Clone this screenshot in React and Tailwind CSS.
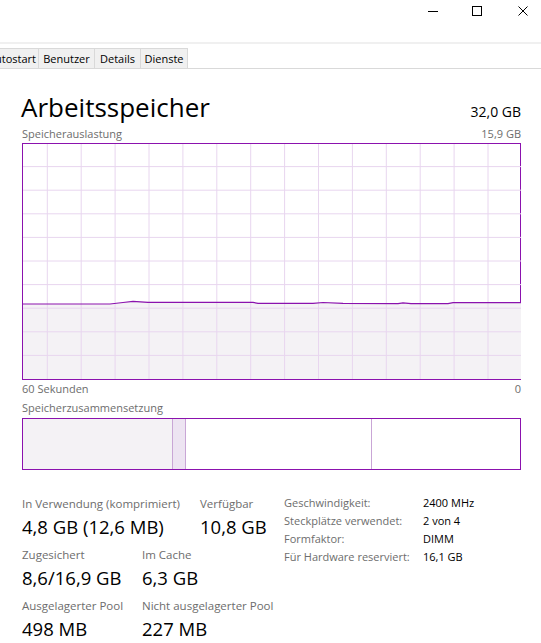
import React from "react";

const FONT = { fontFamily: '"Open Sans", "Noto Sans", "Liberation Sans", sans-serif' };

const GRID_X = Array.from({ length: 14 }, (_, i) => 24.3 + i * 33.9);
const GRID_Y = Array.from({ length: 9 }, (_, i) => 22.6 + i * 23.6);

const LINE = [
  [0, 160], [87, 160], [100, 158.5], [110, 157.4], [125, 158.3], [230, 158.3],
  [235, 159.4], [290, 159.4], [300, 158.5], [320, 159.4], [375, 159.6],
  [380, 158.8], [388, 159.6], [425, 159.6], [430, 158.6], [498, 158.6],
];

function MemGraph() {
  const pts = LINE.map(([x, y]) => `${x},${y}`).join(" ");
  return (
    <div className="border border-[#8b12ae] h-[237px] bg-white">
      <svg width="498" height="235" className="block">
        <polygon points={`0,235 ${pts} 498,235`} fill="#f4f2f5" />
        {GRID_X.map((x) => (
          <line key={"x" + x} x1={x} y1="0" x2={x} y2="235" stroke="#e8d6ef" strokeWidth="1" />
        ))}
        {GRID_Y.map((y) => (
          <line key={"y" + y} x1="0" y1={y} x2="498" y2={y} stroke="#e8d6ef" strokeWidth="1" />
        ))}
        <polyline points={pts} fill="none" stroke="#8b12ae" strokeWidth="1.2" />
      </svg>
    </div>
  );
}

function Stat({ label, value, className }) {
  return (
    <div className={className}>
      <div className="text-[11.5px] leading-[16px] text-[#6d6d6d] whitespace-nowrap">{label}</div>
      <div className="text-[18.5px] leading-[24px] text-black mt-[3px] whitespace-nowrap">{value}</div>
    </div>
  );
}

export default function App() {
  const details = [
    ["Geschwindigkeit:", "2400 MHz"],
    ["Steckplätze verwendet:", "2 von 4"],
    ["Formfaktor:", "DIMM"],
    ["Für Hardware reserviert:", "16,1 GB"],
  ];

  return (
    <div className="w-[541px] h-[643px] overflow-hidden bg-white text-black" style={FONT}>
      {/* Titelleiste */}
      <div className="h-[42px] flex justify-end items-start">
        <div className="w-[46px] h-[22px] flex items-center justify-center">
          <div className="w-[10px] h-px bg-black" />
        </div>
        <div className="w-[46px] h-[22px] flex items-center justify-center ml-[-2px]">
          <div className="w-[10px] h-[10px] border border-black" />
        </div>
        <div className="w-[46px] h-[22px] flex items-center justify-center mr-[-5px]">
          <svg width="10" height="10" viewBox="0 0 10 10">
            <path d="M0.5 0.5 L9.5 9.5 M9.5 0.5 L0.5 9.5" stroke="#000" strokeWidth="1" />
          </svg>
        </div>
      </div>
      <div className="h-[2px] bg-[#f0f0f0]" />

      {/* Tabs */}
      <div className="mt-[4px] h-[21px] border-b border-[#d9d9d9] flex text-[11px] leading-[20px] overflow-hidden">
        <div className="w-[39px] shrink-0 overflow-hidden border-t border-r border-[#d9d9d9] bg-[#f0f0f0] flex justify-end pr-[2px]">
          <span className="whitespace-nowrap">Autostart</span>
        </div>
        <div className="w-[56px] border-t border-r border-[#d9d9d9] bg-[#f0f0f0] text-center">Benutzer</div>
        <div className="w-[46px] border-t border-r border-[#d9d9d9] bg-[#f0f0f0] text-center">Details</div>
        <div className="w-[47px] border-t border-r border-[#d9d9d9] bg-[#f0f0f0] text-center">Dienste</div>
      </div>

      {/* Inhalt */}
      <div className="pl-[22px] pr-[20px]">
        <div className="flex justify-between items-end mt-[20px]">
          <div className="text-[26px] leading-[36px] ml-[-1px]">Arbeitsspeicher</div>
          <div className="text-[14px] leading-[20px] mb-[3px]">32,0 GB</div>
        </div>
        <div className="flex justify-between text-[11px] leading-[16px] text-[#6d6d6d] mt-[1px]">
          <span>Speicherauslastung</span>
          <span>15,9 GB</span>
        </div>
        <div className="mt-[1px]">
          <MemGraph />
        </div>
        <div className="flex justify-between text-[11px] leading-[16px] text-[#6d6d6d] mt-[1px]">
          <span>60 Sekunden</span>
          <span>0</span>
        </div>
        <div className="text-[11px] leading-[16px] text-[#6d6d6d] mt-[3px]">Speicherzusammensetzung</div>
        <div className="mt-[2px] h-[52px] border border-[#8b12ae] flex">
          <div className="w-[150px] bg-[#f4f2f5] border-r border-[#c9a6d6]" />
          <div className="w-[13px] bg-[#ede4f2] border-r border-[#c9a6d6]" />
          <div className="w-[186px] bg-white border-r border-[#c9a6d6]" />
          <div className="flex-1 bg-white" />
        </div>

        {/* Statistik */}
        <div className="flex mt-[24px]">
          <div className="w-[262px] mt-[2px]">
            <div className="flex">
              <Stat className="w-[178px]" label="In Verwendung (komprimiert)" value="4,8 GB (12,6 MB)" />
              <Stat label="Verfügbar" value="10,8 GB" />
            </div>
            <div className="flex mt-[8px]">
              <Stat className="w-[120px]" label="Zugesichert" value="8,6/16,9 GB" />
              <Stat label="Im Cache" value="6,3 GB" />
            </div>
            <div className="flex mt-[8px]">
              <Stat className="w-[120px]" label="Ausgelagerter Pool" value="498 MB" />
              <Stat label="Nicht ausgelagerter Pool" value="227 MB" />
            </div>
          </div>
          <div className="text-[11px] leading-[18px]">
            {details.map(([k, v]) => (
              <div key={k} className="flex">
                <span className="w-[139px] text-[#6d6d6d] whitespace-nowrap">{k}</span>
                <span className="whitespace-nowrap">{v}</span>
              </div>
            ))}
          </div>
        </div>
      </div>
    </div>
  );
}
